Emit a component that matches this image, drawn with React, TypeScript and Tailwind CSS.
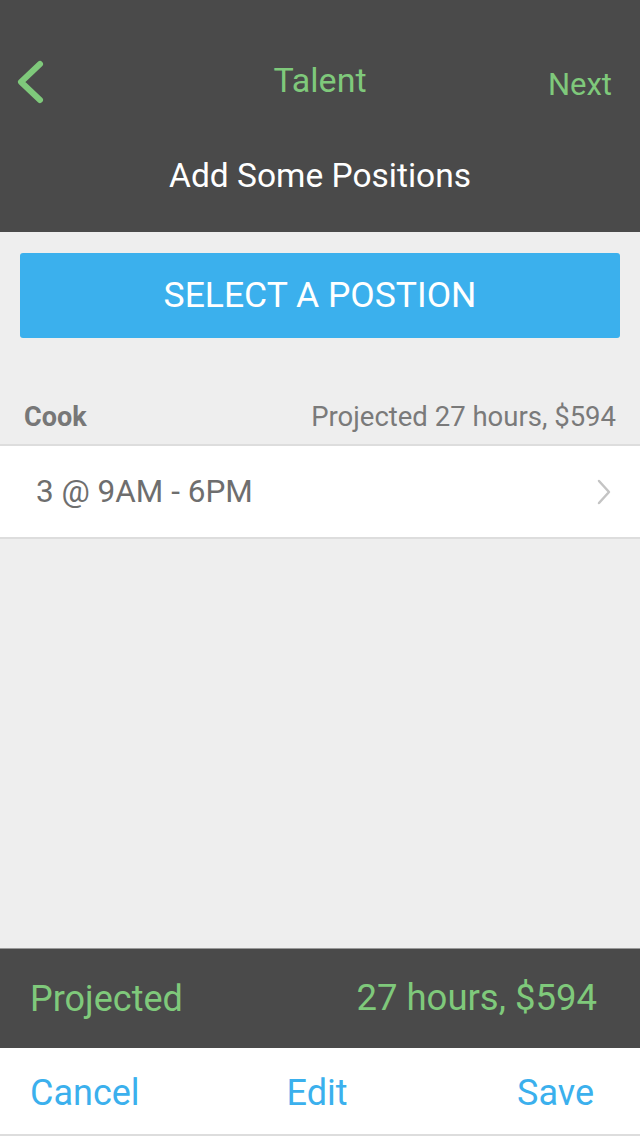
const App = () => {
  return (
    <div className="flex h-[1136px] w-[640px] flex-col bg-[#eeeeee] font-['Roboto',sans-serif]">
      {/* header start */}
      <div className="flex h-[232px] flex-col bg-[#4a4a4a]">
        <div className="relative mt-[54px] flex h-[52px] items-center justify-center">
          <button className="absolute left-[12px] top-[4px]">
            <svg width="36" height="48" viewBox="0 0 36 48" fill="none">
              <polyline
                points="28,6 9,24 28,42"
                stroke="#7fc97b"
                strokeWidth="6"
                strokeLinecap="round"
                strokeLinejoin="round"
              />
            </svg>
          </button>
          <h1 className="text-[34px] text-[#7fc97b]">Talent</h1>
          <button className="absolute right-[28px] top-[8px] text-[31px] text-[#7fc97b]">Next</button>
        </div>
        <p className="mt-[45px] text-center text-[33.5px] text-white">Add Some Positions</p>
      </div>
      {/* header end */}

      {/* body start */}
      <div className="flex flex-1 flex-col">
        <div className="px-5 pt-[21px]">
          <button className="flex h-[85px] w-full items-center justify-center rounded-[3px] bg-[#3bb0ed] text-[35.5px] text-white">
            SELECT A POSTION
          </button>
        </div>

        <div className="mt-[52px] flex h-[56px] items-center justify-between border-b-2 border-[#dddddd] pl-6 pr-6">
          <span className="text-[27px] font-bold text-[#777777]">Cook</span>
          <span className="text-[27.5px] text-[#7a7a7a]">Projected 27 hours, $594</span>
        </div>
        <div className="flex h-[93px] items-center justify-between border-b-2 border-[#dddddd] bg-white pl-[36px] pr-[28px]">
          <span className="text-[31.5px] text-[#6e6e6e]">3 @ 9AM - 6PM</span>
          <svg width="16" height="26" viewBox="0 0 16 26" fill="none">
            <polyline
              points="3,2 13,13 3,24"
              stroke="#c4c4c4"
              strokeWidth="2.5"
              strokeLinecap="round"
              strokeLinejoin="round"
            />
          </svg>
        </div>
      </div>
      {/* body end */}

      {/* footer start */}
      <div className="flex h-[100px] items-center justify-between border-t border-[#999999] bg-[#4a4a4a] pl-[30px] pr-[43px]">
        <span className="text-[36px] text-[#7fc97b]">Projected</span>
        <span className="text-[36.5px] text-[#7fc97b]">27 hours, $594</span>
      </div>
      <div className="grid h-[88px] grid-cols-3 items-center border-b-2 border-[#dddddd] bg-white pl-[30px] pr-[46px] pt-[4px]">
        <button className="text-left text-[36px] text-[#3bb0ed]">Cancel</button>
        <button className="ml-[10px] text-center text-[36px] text-[#3bb0ed]">Edit</button>
        <button className="text-right text-[36px] text-[#3bb0ed]">Save</button>
      </div>
      {/* footer end */}
    </div>
  );
};

export default App;
